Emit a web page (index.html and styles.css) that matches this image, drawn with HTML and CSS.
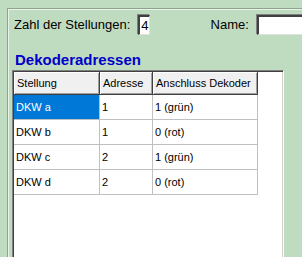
FILE: index.html
```html
<!DOCTYPE html>
<html>
<head>
<meta charset="utf-8">
<link rel="stylesheet" href="styles.css">
</head>
<body>
<div class="group">
  <div class="top-row">
    <span class="label">Zahl der Stellungen:</span>
    <div class="field field-count">4</div>
    <span class="label label-name">Name:</span>
    <div class="field field-name"></div>
  </div>
  <div class="title">Dekoderadressen</div>
  <div class="grid-box">
    <div class="grid">
      <div class="hcell">Stellung</div>
      <div class="hcell">Adresse</div>
      <div class="hcell">Anschluss Dekoder</div>

      <div class="cell selected">DKW a</div>
      <div class="cell">1</div>
      <div class="cell">1 (grün)</div>

      <div class="cell">DKW b</div>
      <div class="cell">1</div>
      <div class="cell">0 (rot)</div>

      <div class="cell">DKW c</div>
      <div class="cell">2</div>
      <div class="cell">1 (grün)</div>

      <div class="cell">DKW d</div>
      <div class="cell">2</div>
      <div class="cell">0 (rot)</div>
    </div>
  </div>
</div>
</body>
</html>
```
FILE: styles.css
```css
html, body {
  margin: 0;
  padding: 0;
}
body {
  width: 302px;
  height: 257px;
  overflow: hidden;
  background: #c0dcc0;
  font-family: "Liberation Sans", Arial, sans-serif;
  color: #000;
}
.group {
  box-sizing: border-box;
  height: 249px;
  margin: 8px 0 0 7px;
  border-top: 1px solid #8fa38f;
  border-left: 1px solid #8fa38f;
  box-shadow: inset 1px 1px 0 #e8f4e8;
  padding: 6px 0 0 4px;
  overflow: hidden;
}
.top-row {
  display: flex;
  align-items: center;
  height: 20px;
  padding-left: 2px;
  font-size: 13px;
}
.label {
  line-height: 20px;
  white-space: nowrap;
}
.field {
  box-sizing: border-box;
  height: 20px;
  background: #fff;
  border-top: 2px solid #404040;
  border-left: 2px solid #404040;
  border-right: 1px solid #e0e0e0;
  border-bottom: 1px solid #e0e0e0;
  box-shadow: -1px -1px 0 #808080;
  font-size: 13px;
  line-height: 17px;
  padding-left: 1px;
}
.field-count {
  width: 26px;
  margin-left: 8px;
}
.label-name {
  margin-left: 61px;
}
.field-name {
  width: 50px;
  margin-left: 8px;
  flex-shrink: 0;
}
.title {
  margin-top: 16px;
  padding-left: 3px;
  font-size: 15px;
  line-height: 18px;
  font-weight: bold;
  color: #0000c8;
}
.grid-box {
  margin-top: 1px;
  width: 272px;
  height: 187px;
  box-sizing: border-box;
  background: #fff;
  border-top: 1px solid #808080;
  border-left: 1px solid #808080;
  border-right: 1px solid #ffffff;
  box-shadow: inset 1px 1px 0 #404040, inset -1px 0 0 #d4d0c8;
  padding: 1px 0 0 1px;
}
.grid {
  display: grid;
  grid-template-columns: 86px 53px 105px;
  grid-auto-rows: 25px;
  grid-template-rows: 23px;
  font-size: 11px;
}
.hcell {
  box-sizing: border-box;
  background: #f0f0f0;
  border-right: 1px solid #404040;
  border-bottom: 1px solid #404040;
  box-shadow: inset 1px 1px 0 #ffffff, inset -1px -1px 0 #a0a0a0;
  padding-left: 3px;
  line-height: 22px;
  white-space: nowrap;
}
.cell {
  box-sizing: border-box;
  border-right: 1px solid #c0c0c0;
  border-bottom: 1px solid #c0c0c0;
  padding-left: 2px;
  line-height: 24px;
  white-space: nowrap;
}
.cell.selected {
  background: #0078d7;
  color: #fff;
}
```
